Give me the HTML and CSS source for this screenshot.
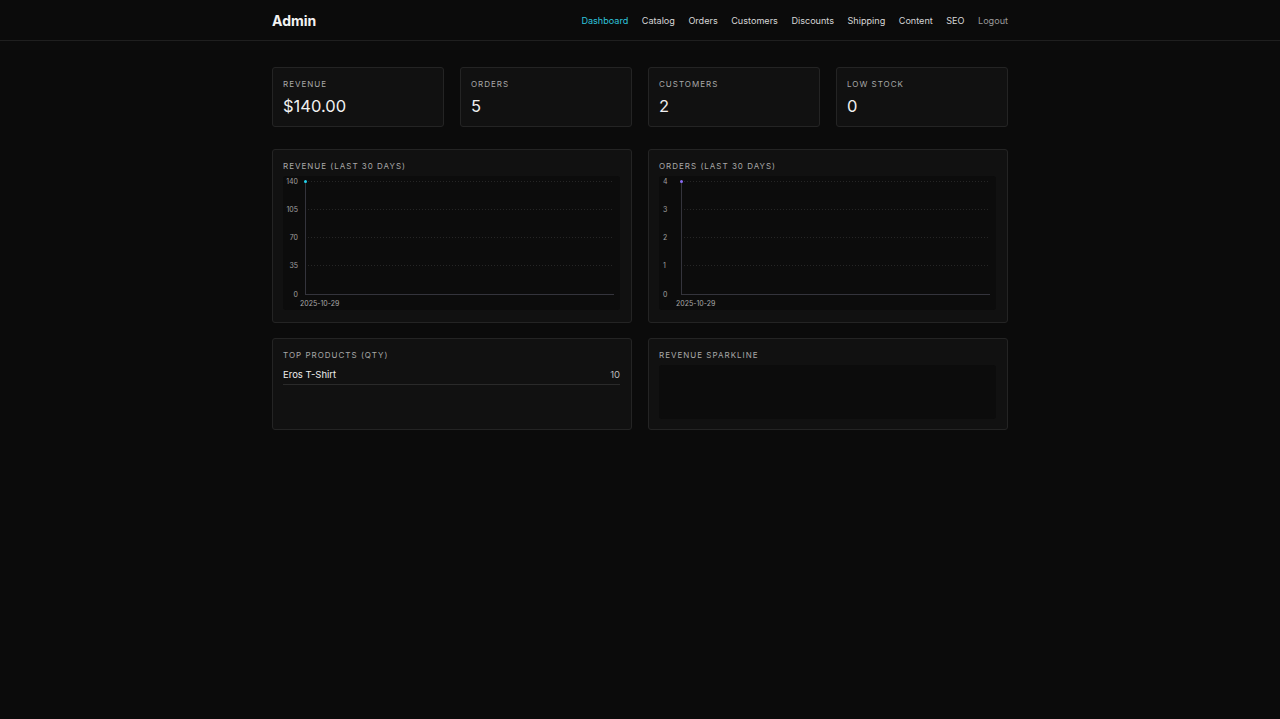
FILE: index.html
```html
<!DOCTYPE html>
<html lang="en">
<head>
    <meta charset="UTF-8">
    <meta name="viewport" content="width=device-width, initial-scale=1.0">
    <title>Admin - Dashboard</title>
    <link rel="stylesheet" href="styles.css">
</head>
<body>
    <header class="topbar">
        <div class="wrap topbar-inner">
            <div class="brand">Admin</div>
            <nav class="nav">
                <a href="#" class="active">Dashboard</a>
                <a href="#">Catalog</a>
                <a href="#">Orders</a>
                <a href="#">Customers</a>
                <a href="#">Discounts</a>
                <a href="#">Shipping</a>
                <a href="#">Content</a>
                <a href="#">SEO</a>
                <a href="#" class="logout">Logout</a>
            </nav>
        </div>
    </header>

    <main class="wrap">
        <section class="stats">
            <div class="card stat">
                <div class="label">Revenue</div>
                <div class="value">$140.00</div>
            </div>
            <div class="card stat">
                <div class="label">Orders</div>
                <div class="value">5</div>
            </div>
            <div class="card stat">
                <div class="label">Customers</div>
                <div class="value">2</div>
            </div>
            <div class="card stat">
                <div class="label">Low stock</div>
                <div class="value">0</div>
            </div>
        </section>

        <section class="charts">
            <div class="card">
                <div class="label">Revenue (last 30 days)</div>
                <div class="chart">
                    <svg viewBox="0 0 337 134" preserveAspectRatio="xMinYMin meet">
                        <g class="grid">
                            <line x1="22" y1="5.5" x2="331" y2="5.5"/>
                            <line x1="22" y1="33.5" x2="331" y2="33.5"/>
                            <line x1="22" y1="61.5" x2="331" y2="61.5"/>
                            <line x1="22" y1="89.5" x2="331" y2="89.5"/>
                        </g>
                        <g class="axis">
                            <line x1="22.5" y1="5" x2="22.5" y2="118"/>
                            <line x1="22" y1="118.5" x2="331" y2="118.5"/>
                        </g>
                        <g class="ticks">
                            <text x="15" y="8">140</text>
                            <text x="15" y="36">105</text>
                            <text x="15" y="64">70</text>
                            <text x="15" y="92">35</text>
                            <text x="15" y="121">0</text>
                        </g>
                        <text class="date" x="17" y="130">2025-10-29</text>
                        <circle cx="22.5" cy="5.5" r="1.5" fill="#22d3ee"/>
                    </svg>
                </div>
            </div>
            <div class="card">
                <div class="label">Orders (last 30 days)</div>
                <div class="chart">
                    <svg viewBox="0 0 337 134" preserveAspectRatio="xMinYMin meet">
                        <g class="grid">
                            <line x1="22" y1="5.5" x2="331" y2="5.5"/>
                            <line x1="22" y1="33.5" x2="331" y2="33.5"/>
                            <line x1="22" y1="61.5" x2="331" y2="61.5"/>
                            <line x1="22" y1="89.5" x2="331" y2="89.5"/>
                        </g>
                        <g class="axis">
                            <line x1="22.5" y1="5" x2="22.5" y2="118"/>
                            <line x1="22" y1="118.5" x2="331" y2="118.5"/>
                        </g>
                        <g class="ticks left">
                            <text x="4" y="8">4</text>
                            <text x="4" y="36">3</text>
                            <text x="4" y="64">2</text>
                            <text x="4" y="92">1</text>
                            <text x="4" y="121">0</text>
                        </g>
                        <text class="date" x="17" y="130">2025-10-29</text>
                        <circle cx="22.5" cy="5.5" r="1.5" fill="#8b6cf6"/>
                    </svg>
                </div>
            </div>
        </section>

        <section class="charts lower">
            <div class="card">
                <div class="label">Top products (qty)</div>
                <ul class="top-list">
                    <li><span>Eros T-Shirt</span><span class="qty">10</span></li>
                </ul>
            </div>
            <div class="card">
                <div class="label">Revenue sparkline</div>
                <div class="sparkline"></div>
            </div>
        </section>
    </main>
</body>
</html>
```

FILE: styles.css
```css
body {
    margin: 0;
    background: #0b0b0b;
    color: #e8e8e8;
    font-family: Inter, "Noto Sans", sans-serif;
    min-height: 100vh;
}
.wrap {
    width: 736px;
    margin: 0 auto;
}
.topbar {
    border-bottom: 1px solid #1f1f1f;
}
.topbar-inner {
    height: 40px;
    display: flex;
    align-items: center;
    justify-content: space-between;
}
.brand {
    font-size: 14px;
    font-weight: 700;
    color: #f2f2f2;
}
.nav {
    display: flex;
    gap: 13.5px;
}
.nav a {
    font-size: 9.1px;
    color: #d6d6d6;
    text-decoration: none;
}
.nav a.active {
    color: #2ec4dc;
}
.nav a.logout {
    color: #9a9a9a;
}

.card {
    background: #111111;
    border: 1px solid #242424;
    border-radius: 3px;
    padding: 11px 11px 12px 10px;
}
.label {
    font-size: 8px;
    line-height: 10px;
    letter-spacing: 1px;
    text-transform: uppercase;
    color: #a8a8a8;
}

.stats {
    display: grid;
    grid-template-columns: repeat(4, 1fr);
    gap: 16px;
    margin-top: 26px;
}
.stat {
    height: 38px;
    padding-bottom: 9px;
}
.stat .value {
    font-size: 16.5px;
    line-height: 20px;
    color: #f0f0f0;
    margin-top: 7px;
}

.charts {
    display: grid;
    grid-template-columns: 1fr 1fr;
    gap: 16px;
    margin-top: 22px;
}
.charts.lower {
    margin-top: 15px;
}
.charts.lower .card {
    padding-bottom: 10px;
}
.chart {
    margin-top: 5px;
    background: #0c0c0c;
    border-radius: 3px;
    height: 134px;
}
.chart svg {
    display: block;
    width: 337px;
    height: 134px;
}
.grid line {
    stroke: #262626;
    stroke-width: 1;
    stroke-dasharray: 1 2;
}
.axis line {
    stroke: #34343c;
    stroke-width: 1;
}
.ticks text {
    font-size: 7px;
    fill: #a0a0a0;
    text-anchor: end;
    font-family: Inter, sans-serif;
}
.ticks.left text {
    text-anchor: start;
}
.date {
    font-size: 7px;
    fill: #a8a8a8;
    font-family: Inter, sans-serif;
}

.top-list {
    list-style: none;
    margin: 9px 0 0;
    padding: 0;
}
.top-list li {
    display: flex;
    justify-content: space-between;
    font-size: 9.5px;
    line-height: 12px;
    color: #eeeeee;
    padding-bottom: 3px;
    border-bottom: 1px solid #2a2a2a;
}
.top-list .qty {
    color: #bbbbbb;
}
.sparkline {
    margin-top: 5px;
    height: 54px;
    background: #0c0c0c;
    border-radius: 3px;
}
```
